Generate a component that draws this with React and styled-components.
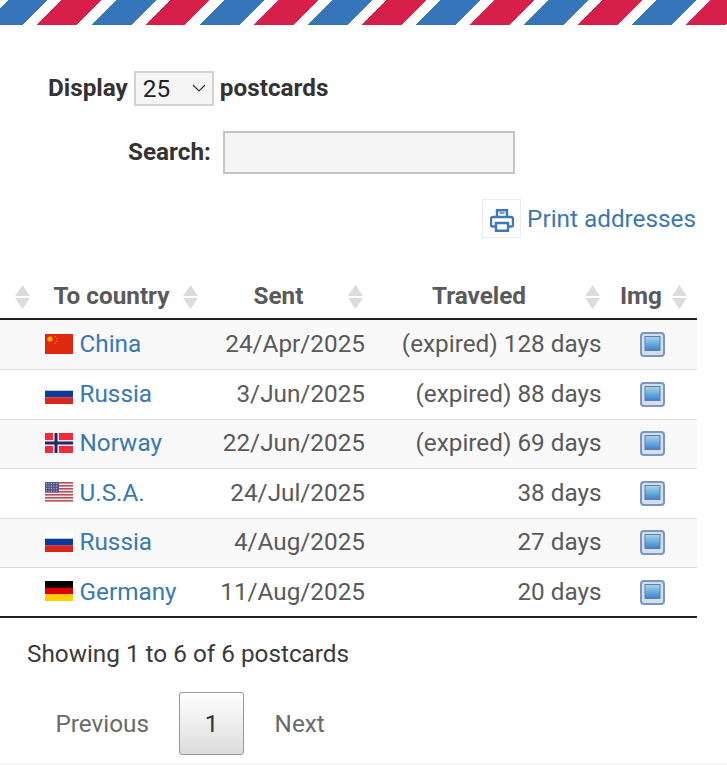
import React from "react";
import styled, { createGlobalStyle } from "styled-components";

const GlobalStyle = createGlobalStyle`
  html, body {
    margin: 0;
    padding: 0;
    background: #fff;
  }
  body {
    font-family: Roboto, "Liberation Sans", sans-serif;
    font-size: 24.3px;
    color: #333;
  }
`;

const Page = styled.div`
  width: 727px;
  height: 765px;
  overflow: hidden;
  border-bottom: 1px solid #eee;
  box-sizing: border-box;
`;

const Stripes = styled.div`
  height: 24.5px;
  background-image: repeating-linear-gradient(
    135deg,
    #fff 0,
    #fff 5.66px,
    #3575b9 5.66px,
    #3575b9 33.94px,
    #fff 33.94px,
    #fff 43.84px,
    #d6204a 43.84px,
    #d6204a 72.12px,
    #fff 72.12px,
    #fff 76.37px
  );
`;

const LengthRow = styled.div`
  display: flex;
  align-items: center;
  gap: 6px;
  height: 34px;
  margin: 46.5px 0 0 48px;
  font-weight: 700;
  color: #333;
`;

const FormLabel = styled.span`
  padding-bottom: 2px;
`;

const Select = styled.select`
  appearance: none;
  width: 80px;
  height: 35px;
  padding: 0 0 0 7px;
  border: 2px solid #d2d2d2;
  border-radius: 0;
  font-family: inherit;
  font-size: 24.3px;
  color: #222;
  background: #f5f5f5
    url("data:image/svg+xml,%3Csvg xmlns='http://www.w3.org/2000/svg' width='14' height='8'%3E%3Cpath d='M1 1l6 6 6-6' fill='none' stroke='%23333' stroke-width='1.2'/%3E%3C/svg%3E")
    no-repeat right 6px center;
`;

const SearchRow = styled.label`
  display: flex;
  align-items: center;
  gap: 12px;
  height: 44px;
  margin: 25.5px 0 0 128px;
  font-weight: 700;
  color: #333;
`;

const SearchInput = styled.input`
  width: 292px;
  height: 43px;
  box-sizing: border-box;
  border: 2px solid #c4c4c4;
  background: #f5f5f5;
`;

const PrintRow = styled.div`
  display: flex;
  justify-content: flex-end;
  align-items: center;
  gap: 6px;
  width: 696px;
  margin-top: 23.5px;
`;

const PrintBox = styled.span`
  display: flex;
  align-items: center;
  justify-content: center;
  width: 39px;
  height: 39px;
  box-sizing: border-box;
  padding-top: 3px;
  border: 1px solid #e6edf3;
`;

const PrintLink = styled.a`
  color: #3a78b2;
  text-decoration: none;
  line-height: 41px;
`;

const LinkText = styled.a`
  color: #3a78b2;
  text-decoration: none;
`;

const Table = styled.div`
  width: 697px;
  margin-top: 36px;
  color: #5a5a5a;
  border-bottom: 2px solid #222;
`;

const grid = `
  display: grid;
  grid-template-columns: 38px 167px 167px 238px 87px;
`;

const HeadRow = styled.div`
  ${grid}
  height: 43px;
  border-bottom: 2px solid #222;
  font-weight: 700;
`;

const HeadCell = styled.div`
  display: flex;
  align-items: center;
  padding-right: ${(p) => p.$right}px;
  min-width: 0;
`;

const FirstHeadCell = styled.div`
  display: flex;
  align-items: center;
  padding-left: 15px;
`;

const HeadText = styled.span`
  flex: 1;
  text-align: center;
  padding-left: ${(p) => p.$shift ?? 0}px;
  margin-top: -2px;
`;

const SortIcon = styled.svg`
  flex: none;
  width: 15px;
  height: 26px;
  fill: #dcdcdc;
`;

const Row = styled.div`
  ${grid}
  height: 49.4px;
  box-sizing: border-box;
  align-items: center;
  background: ${(p) => (p.$odd ? "#f9f9f9" : "#fff")};
  border-top: ${(p) => (p.$first ? "0" : "1.5px solid #ddd")};
`;

const CountryCell = styled.div`
  grid-column: 2;
  display: flex;
  align-items: center;
  gap: 6.5px;
  padding-left: 7px;
  margin-top: -2px;
`;

const DateCell = styled.div`
  text-align: right;
  padding-right: 7px;
  margin-top: -2px;
`;

const DaysCell = styled.div`
  text-align: right;
  padding-right: 8.5px;
  margin-top: -2px;
`;

const ImgCell = styled.div`
  display: flex;
  justify-content: flex-start;
  padding-left: 30px;
`;

const Info = styled.div`
  margin: 21px 0 0 27px;
  color: #3a3a3a;
`;

const Pager = styled.div`
  display: flex;
  align-items: center;
  margin: 23.5px 0 0 55.5px;
  color: #6a6a6a;
`;

const CurrentPage = styled.span`
  display: flex;
  align-items: center;
  justify-content: center;
  width: 65px;
  height: 63px;
  box-sizing: border-box;
  margin: 0 30.5px 0 30px;
  border: 1px solid #979797;
  border-radius: 3px;
  color: #333;
  background: linear-gradient(to bottom, #fff 0%, #dcdcdc 100%);
`;

const ChinaFlag = () => (
  <svg width="28" height="20" viewBox="0 0 28 20">
    <rect width="28" height="20" fill="#de2910" />
    <circle cx="5" cy="5" r="2.6" fill="#ffb400" />
    <circle cx="10" cy="2.5" r="0.7" fill="#f08a00" />
    <circle cx="12" cy="4.5" r="0.7" fill="#f08a00" />
    <circle cx="12" cy="7" r="0.7" fill="#f08a00" />
    <circle cx="10" cy="9" r="0.7" fill="#f08a00" />
  </svg>
);

const RussiaFlag = () => (
  <svg width="28" height="20" viewBox="0 0 28 20">
    <rect width="28" height="7" fill="#fff" />
    <rect y="6.7" width="28" height="6.7" fill="#0a3a9c" />
    <rect y="13.3" width="28" height="6.7" fill="#d8281c" />
  </svg>
);

const NorwayFlag = () => (
  <svg width="28" height="20" viewBox="0 0 28 20">
    <rect width="28" height="20" fill="#ef2b3d" />
    <rect x="8" width="6" height="20" fill="#f4e4e8" />
    <rect y="7" width="28" height="6" fill="#f4e4e8" />
    <rect x="9.5" width="3" height="20" fill="#1f2c66" />
    <rect y="8.5" width="28" height="3" fill="#1f2c66" />
  </svg>
);

const UsaFlag = () => (
  <svg width="28" height="20" viewBox="0 0 28 20">
    <rect width="28" height="20" fill="#f4ecec" />
    {[0, 3, 6, 9, 12, 15, 18].map((y) => (
      <rect key={y} y={y} width="28" height="1.6" fill="#b9505c" />
    ))}
    <rect width="14" height="10.5" fill="#54578c" />
    {[1.5, 4, 6.5, 9].map((y) =>
      [1.5, 4, 6.5, 9, 11.5].map((x) => (
        <circle key={x + "-" + y} cx={x} cy={y} r="0.55" fill="#c8c8de" />
      ))
    )}
  </svg>
);

const GermanyFlag = () => (
  <svg width="28" height="20" viewBox="0 0 28 20">
    <rect width="28" height="7" fill="#000" />
    <rect y="6.7" width="28" height="6.7" fill="#dd0000" />
    <rect y="13.3" width="28" height="6.7" fill="#ffce00" />
  </svg>
);

const PrinterIcon = () => (
  <svg width="24" height="23" viewBox="0 0 24 23" fill="none" stroke="#3f78b4" strokeWidth="2.4">
    <path d="M7 8V1.2h10V8" />
    <path d="M9.5 4h5" strokeWidth="1.4" />
    <path d="M6 17.5H2.5a1.5 1.5 0 0 1-1.5-1.5V10a2 2 0 0 1 2-2h18a2 2 0 0 1 2 2v6a1.5 1.5 0 0 1-1.5 1.5H18" />
    <path d="M6 14h12v7.8H6z" />
  </svg>
);

const ImageIcon = () => (
  <svg width="25" height="25" viewBox="0 0 25 25">
    <defs>
      <linearGradient id="photoSky" x1="0" y1="0" x2="0" y2="1">
        <stop offset="0" stopColor="#a4d8ee" />
        <stop offset="1" stopColor="#3a82cc" />
      </linearGradient>
    </defs>
    <rect x="1" y="1" width="23" height="23" rx="3" fill="#d6deea" stroke="#7a96c4" strokeWidth="2" />
    <rect x="5" y="4.5" width="15" height="14" fill="url(#photoSky)" stroke="#5f7da8" strokeWidth="1" />
  </svg>
);

const Sort = () => (
  <SortIcon viewBox="0 0 15 26">
    <path d="M7.5 1l7.5 11H0z" />
    <path d="M7.5 25L0 14h15z" />
  </SortIcon>
);

const rows = [
  { flag: <ChinaFlag />, name: "China", sent: "24/Apr/2025", days: "(expired) 128 days" },
  { flag: <RussiaFlag />, name: "Russia", sent: "3/Jun/2025", days: "(expired) 88 days" },
  { flag: <NorwayFlag />, name: "Norway", sent: "22/Jun/2025", days: "(expired) 69 days" },
  { flag: <UsaFlag />, name: "U.S.A.", sent: "24/Jul/2025", days: "38 days" },
  { flag: <RussiaFlag />, name: "Russia", sent: "4/Aug/2025", days: "27 days" },
  { flag: <GermanyFlag />, name: "Germany", sent: "11/Aug/2025", days: "20 days" },
];

export default function App() {
  return (
    <Page>
      <GlobalStyle />
      <Stripes />
      <LengthRow>
        <FormLabel>Display</FormLabel>
        <Select defaultValue="25">
          <option>10</option>
          <option>25</option>
          <option>50</option>
        </Select>
        <FormLabel>postcards</FormLabel>
      </LengthRow>
      <SearchRow>
        <FormLabel>Search:</FormLabel>
        <SearchInput type="text" />
      </SearchRow>
      <PrintRow>
        <PrintBox>
          <PrinterIcon />
        </PrintBox>
        <PrintLink>Print addresses</PrintLink>
      </PrintRow>
      <Table>
        <HeadRow>
          <FirstHeadCell>
            <Sort />
          </FirstHeadCell>
          <HeadCell $right={7}>
            <HeadText $shift={2}>To country</HeadText>
            <Sort />
          </HeadCell>
          <HeadCell $right={9}>
            <HeadText $shift={4}>Sent</HeadText>
            <Sort />
          </HeadCell>
          <HeadCell $right={10}>
            <HeadText $shift={1}>Traveled</HeadText>
            <Sort />
          </HeadCell>
          <HeadCell $right={10}>
            <HeadText>Img</HeadText>
            <Sort />
          </HeadCell>
        </HeadRow>
        {rows.map((r, i) => (
          <Row key={i} $odd={i % 2 === 0} $first={i === 0}>
            <CountryCell>
              {r.flag}
              <LinkText>{r.name}</LinkText>
            </CountryCell>
            <DateCell>{r.sent}</DateCell>
            <DaysCell>{r.days}</DaysCell>
            <ImgCell>
              <ImageIcon />
            </ImgCell>
          </Row>
        ))}
      </Table>
      <Info>Showing 1 to 6 of 6 postcards</Info>
      <Pager>
        <span>Previous</span>
        <CurrentPage>1</CurrentPage>
        <span>Next</span>
      </Pager>
    </Page>
  );
}
